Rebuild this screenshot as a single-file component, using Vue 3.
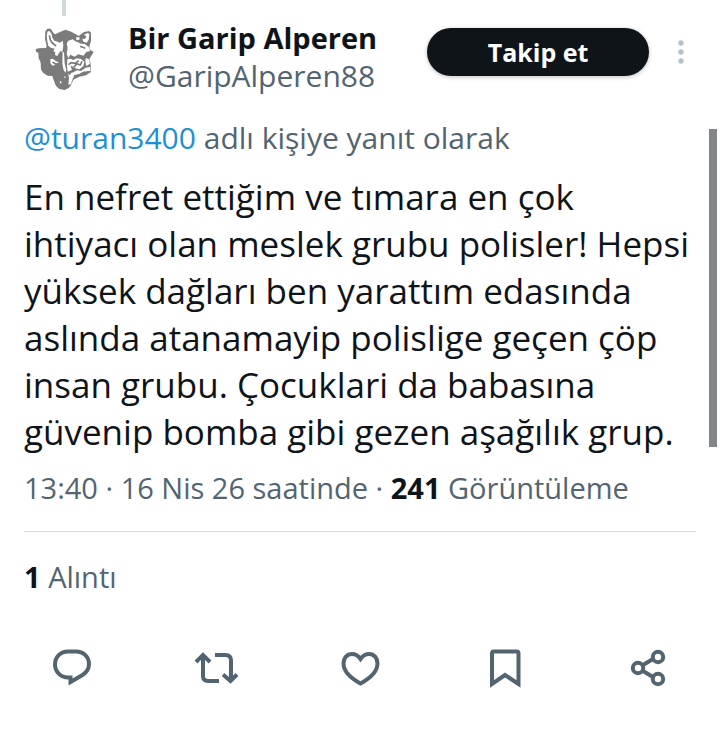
<script setup>
import { ref } from 'vue'

const following = ref(false)

const lines = [
    'En nefret ettiğim ve tımara en çok',
    'ihtiyacı olan meslek grubu polisler! Hepsi',
    'yüksek dağları ben yarattım edasında',
    'aslında atanamayip polislige geçen çöp',
    'insan grubu. Çocuklari da babasına',
    'güvenip bomba gibi gezen aşağılık grup.',
]
const postText = lines.join('\n')
</script>

<template>
    <main class="page">
        <div class="thread-line"></div>

        <article class="post">
            <header class="header">
                <a class="avatar" href="#" aria-label="Bir Garip Alperen">
                    <svg viewBox="72 54 240 240">
                        <path fill="#7b7b7b" d="M107 148L115 145L138 144L140 138L135 116L136 94L142 86L152 86L160 98L165 103L180 96L196 89L214 95L227 103L236 108L252 96L267 93L273 98L273 123L268 139L272 151L281 156L273 169L268 178L272 190L272 217L258 226L238 230L220 239L213 255L207 263L194 270L178 267L168 258L160 238L157 228L143 227L130 219L123 209L122 188L116 174L115 158L108 155Z" />
                        <g fill="#fff">
                            <path d="M143 94L149 94L155 102L157 113L163 122L173 125L180 128L188 122L190 136L188 152L186 160L184 151L177 159L172 168L165 165L166 157L160 153L164 146L152 143L145 137L142 124L140 108Z" />
                            <path d="M204 123L218 118L226 124L234 127L243 131L254 132L262 138L269 143L270 153L259 156L250 167L235 163L224 170L211 164L205 174L200 161L203 143L200 132Z" />
                            <path d="M251 104L264 99L268 103L266 119L260 128L250 125L247 116L255 117L259 108Z" />
                            <path d="M228 112L239 112L238 119L230 121Z" />
                            <path d="M151 177L158 176L168 184L178 187L169 190L160 185L155 187L166 195L158 197L151 190Z" />
                            <path d="M188 157L192 157L194 190L199 211L196 218L190 208L187 190Z" />
                            <path d="M202 178L211 176L220 180L231 175L243 177L253 185L250 198L238 208L226 205L211 196L216 209L203 215L201 199Z" />
                            <path d="M257 174L267 178L270 191L259 198L256 185Z" />
                            <path d="M220 217L231 211L243 213L257 203L270 201L271 212L249 215L237 222L223 225L218 237L213 252L205 254L207 235L205 222Z" />
                        </g>
                        <g fill="none" stroke="#7b7b7b" stroke-width="5">
                            <path d="M148 106L151 120L157 129L168 138M205 194L214 188L226 190L236 182M221 202L231 191L241 195L246 184M208 217L211 224M240 139L256 145" />
                        </g>
                        <path fill="#fff" d="M179 244h5v6h-4zM193 229h3v5h-3z" />
                    </svg>
                </a>
                <div class="names">
                    <h1 class="name">Bir Garip Alperen</h1>
                    <a class="handle" href="#">@GaripAlperen88</a>
                </div>
                <button class="follow" type="button" :aria-pressed="following" @click="following = !following">Takip et</button>
                <button class="more" type="button" aria-label="Daha fazla">
                    <svg viewBox="0 0 8 26">
                        <circle cx="4" cy="4" r="2.700" />
                        <circle cx="4" cy="13" r="2.700" />
                        <circle cx="4" cy="22" r="2.700" />
                    </svg>
                </button>
            </header>

            <p class="reply"><a href="#">@turan3400</a> adlı kişiye yanıt olarak</p>
            <p class="text">{{ postText }}</p>
            <p class="meta">13:40 · 16 Nis 26 saatinde · <b>241</b> Görüntüleme</p>
            <p class="quotes"><b>1</b> Alıntı</p>
        </article>

        <nav class="actions">
            <button type="button" aria-label="Yanıtla">
                <svg viewBox="0 0 48 48">
                    <path d="M20 7.500H28C35.500 7.500 41 13 41 20C41 25 38.500 28.500 34.500 31L22.500 38V33.500H20C12.500 33.500 7 27.500 7 20.500C7 13 12.500 7.500 20 7.500Z" />
                </svg>
            </button>
            <button type="button" aria-label="Yeniden gönder">
                <svg viewBox="0 0 48 48">
                    <path d="M4 18L11 11L18 18M11 12V32Q11 37 16 37H27M23 11H33.500Q39 11 39 16.500V36M31 30.500L38.500 37L45 30.500" />
                </svg>
            </button>
            <button type="button" aria-label="Beğen">
                <svg viewBox="0 0 48 48">
                    <path d="M24.500 15C22 11.500 19 10 16 10C11 10 7.500 14 7.500 19.500C7.500 27 14.500 34 24.500 39.500C34.500 34 41.500 27 41.500 19.500C41.500 14 38 10 33 10C30 10 27 11.500 24.500 15Z" />
                </svg>
            </button>
            <button type="button" aria-label="Yer işareti">
                <svg viewBox="0 0 48 48">
                    <path d="M13.500 7.500H36.500Q38.500 7.500 38.500 9.500V40L25 31L12 40V9.500Q12 7.500 13.500 7.500Z" />
                </svg>
            </button>
            <button type="button" aria-label="Paylaş">
                <svg viewBox="0 0 48 48">
                    <path d="M19 21L29 15M19 27L29 33" />
                    <circle cx="14" cy="24" r="5.200" />
                    <circle cx="34" cy="13" r="5.200" />
                    <circle cx="34" cy="35" r="5.200" />
                </svg>
            </button>
        </nav>

        <div class="scroll-thumb"></div>
    </main>
</template>

<style>
body {
    margin: 0;
    background-color: #fff;
}
</style>

<style scoped>
.page {
    position: relative;
    font-family: 'Open Sans', 'Noto Sans', sans-serif;
    color: #0f1419;
}
.thread-line {
    width: 4px;
    height: 16px;
    margin-left: 62px;
    background-color: #cfd9de;
}
.post {
    padding: 0 24px;
}
.header {
    display: flex;
    align-items: flex-start;
}
.avatar {
    flex: none;
    width: 80px;
    height: 80px;
    margin-top: 2px;
    margin-right: 24px;
}
.avatar svg {
    display: block;
    width: 100%;
}
.names {
    flex: 1;
    min-width: 0;
    padding-top: 4px;
    white-space: nowrap;
}
.name {
    margin: 0;
    font-size: 29px;
    line-height: 36px;
    font-weight: 700;
}
.handle {
    display: block;
    font-size: 30px;
    line-height: 40px;
    color: #536471;
    text-decoration: none;
}
.follow {
    flex: none;
    width: 222px;
    height: 48px;
    margin-top: 12px;
    padding: 0;
    border: none;
    border-radius: 24px;
    background-color: #0f1419;
    box-shadow: 0 1px 4px rgba(0, 0, 0, 0.25);
    color: #fff;
    font-family: inherit;
    font-size: 25px;
    font-weight: 700;
    line-height: 46px;
    cursor: pointer;
}
.more {
    flex: none;
    width: 24px;
    height: 48px;
    margin-top: 12px;
    margin-left: 20px;
    margin-right: 3px;
    padding: 0;
    border: none;
    background: none;
    cursor: pointer;
}
.more svg {
    display: block;
    width: 8px;
    height: 26px;
    margin: 0 auto;
    fill: #b4c2c8;
}
.reply,
.meta,
.quotes {
    margin: 0;
    font-size: 29px;
    line-height: 40px;
    color: #536471;
}
.reply {
    margin-top: 20px;
    font-size: 30px;
}
.reply a {
    color: #1d8fd6;
    text-decoration: none;
}
.text {
    margin: 15px 0 0;
    font-size: 35px;
    line-height: 47px;
    white-space: pre;
}
.meta {
    margin-top: 13px;
    padding-bottom: 23px;
    border-bottom: 1px solid #cfd9de;
}
.quotes {
    margin-top: 25px;
}
.meta b,
.quotes b {
    color: #0f1419;
}
.actions {
    display: grid;
    grid-template-columns: repeat(5, 1fr);
    margin-top: 47px;
}
.actions button {
    display: flex;
    justify-content: center;
    padding: 0;
    border: none;
    background: none;
    cursor: pointer;
}
.actions svg {
    width: 48px;
    height: 48px;
    fill: none;
    stroke: #536471;
    stroke-width: 4;
}
.scroll-thumb {
    position: absolute;
    top: 129px;
    right: 3px;
    width: 8px;
    height: 318px;
    background-color: #838689;
}
</style>
